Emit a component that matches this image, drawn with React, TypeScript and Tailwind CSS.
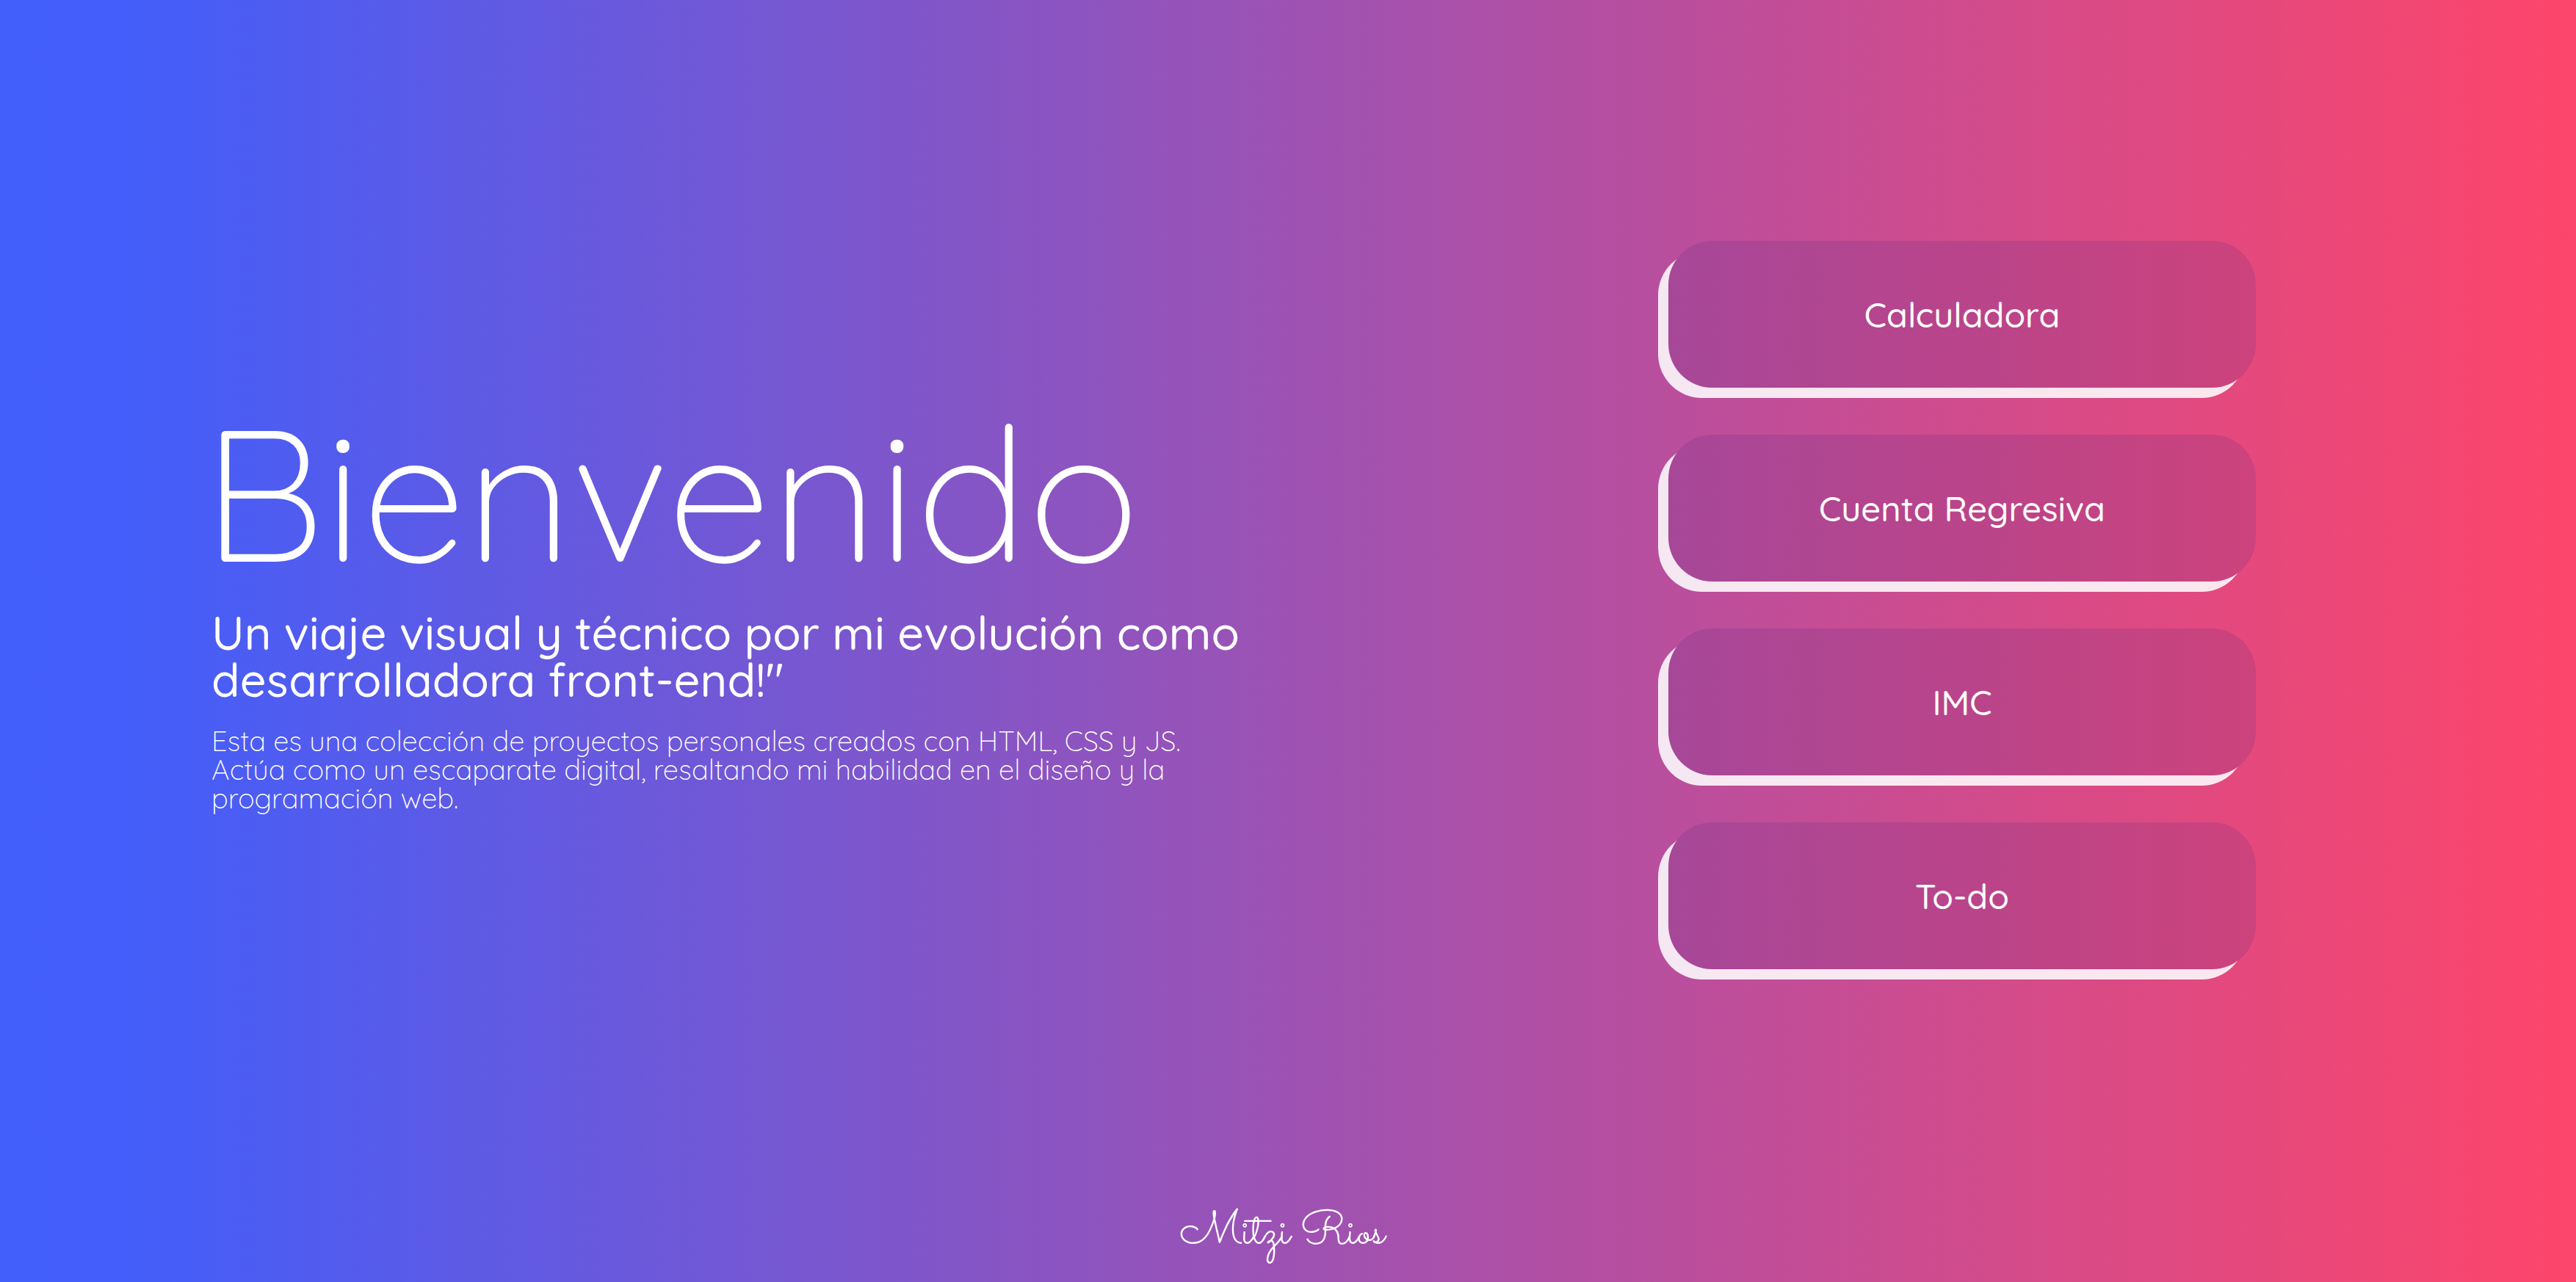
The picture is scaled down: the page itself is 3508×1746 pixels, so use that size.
const projects = ["Calculadora", "Cuenta Regresiva", "IMC", "To-do"];

export default function App() {
  return (
    <div className="flex min-h-screen flex-col bg-[linear-gradient(to_right,#425efb_0%,#435efa_5%,#9d52b3_50%,#fa466d_98%,#fc466b_100%)] font-['Quicksand','Lato',sans-serif] text-white">
      <main className="grid flex-1 grid-cols-[1408fr_428fr_1096fr] items-center px-72">
        <section className="flex flex-col gap-8">
          <h1 className="-ml-3 text-[254px] leading-[256px] font-light">Bienvenido</h1>
          <h2 className="text-[63px] leading-[64px] font-medium">
            Un viaje visual y técnico por mi evolución como desarrolladora front-end!"
          </h2>
          <p className="text-[38px] leading-[39px] font-light">
            Esta es una colección de proyectos personales creados con HTML, CSS y JS. Actúa como un
            escaparate digital, resaltando mi habilidad en el diseño y la programación web.
          </p>
        </section>
        <nav className="col-start-3 flex flex-col items-center gap-16">
          {projects.map((name) => (
            <button
              key={name}
              type="button"
              className="h-[200px] w-full max-w-[800px] rounded-[60px] bg-[rgba(60,35,125,0.15)] pt-0.5 text-[47px] font-medium shadow-[-14px_14px_0_rgba(255,255,255,0.87)]"
            >
              {name}
            </button>
          ))}
        </nav>
      </main>
      <footer className="flex h-[98px] justify-center pr-4">
        <p className="font-['Sacramento',cursive] text-[64px] leading-[64px]">Mitzi Rios</p>
      </footer>
    </div>
  );
}
